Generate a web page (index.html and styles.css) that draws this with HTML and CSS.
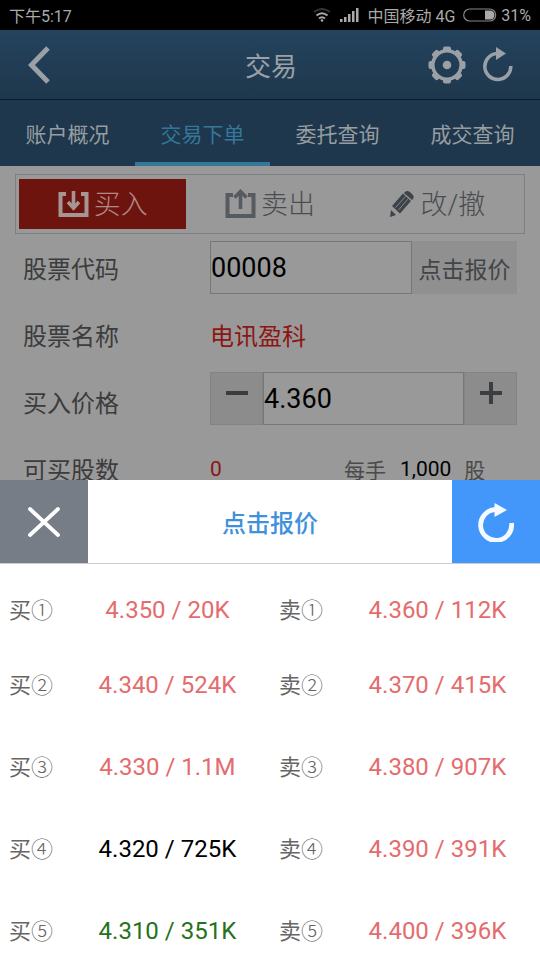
FILE: index.html
```html
<!DOCTYPE html>
<html lang="zh-CN">
<head>
<meta charset="utf-8">
<meta name="viewport" content="width=device-width, initial-scale=1">
<title>交易</title>
<link rel="stylesheet" href="styles.css">
</head>
<body>
<div class="page">
  <div class="status">
    <span class="clock">下午5:17</span>
    <svg class="wifi" width="18" height="14" viewBox="0 0 18 14" fill="none" stroke="#aaa"><path d="M1 4Q9-2 17 4" stroke="#333" stroke-width="2"/><path d="M3.500 7.500Q9 3 14.500 7.500" stroke-width="2"/><path d="M6 10.500Q9 8 12 10.500" stroke-width="2"/><circle cx="9" cy="12.500" r="1.300" fill="#aaa" stroke="none"/></svg>
    <svg class="signal" width="19" height="14" viewBox="0 0 19 14" fill="#aaa"><path d="M0 11h2.500v3H0zM4 9h2.500v5H4zM8 6h2.500v8H8zM12 3h2.500v11H12zM16 0h2.500v14H16z"/></svg>
    <span class="carrier">中国移动 4G</span>
    <svg class="battery" width="34" height="14" viewBox="0 0 34 14"><rect x=".7" y="1" width="32" height="12" rx="6" fill="none" stroke="#888" stroke-width="1.200"/><path d="M22 2.500h5a4.500 4.500 0 0 1 0 9h-5z" fill="#aaa"/></svg>
    <span>31%</span>
  </div>
  <header class="header">
    <button class="icon-button back" aria-label="返回"><svg width="22" height="38" viewBox="0 0 22 38" fill="none" stroke="#9aa0a5" stroke-width="5"><path d="M20 2L3.500 19L20 36"/></svg></button>
    <h1>交易</h1>
    <div class="actions">
      <button class="icon-button" aria-label="设置"><svg width="38" height="38" viewBox="-19 -19 38 38" fill="#9aa0a5"><circle r="14.200" fill="none" stroke="#9aa0a5" stroke-width="3.600"/><g id="teeth"><rect x="-4" y="-18.500" width="8" height="5" rx="2"/><rect x="-4" y="13.500" width="8" height="5" rx="2"/><rect x="-18.500" y="-4" width="5" height="8" rx="2"/><rect x="13.500" y="-4" width="5" height="8" rx="2"/></g><use href="#teeth" transform="rotate(45)"/><circle r="4.300"/></svg></button>
      <button class="icon-button" aria-label="刷新"><svg width="32" height="36" viewBox="0 0 32 36"><path d="M28.800 19A13 13 0 1 1 15 6.500" fill="none" stroke="#9aa0a5" stroke-width="3.500"/><path d="M14 0L24 6.500L14 13z" fill="#9aa0a5"/></svg></button>
    </div>
  </header>
  <nav class="tabs">
    <a href="#overview">账户概况</a>
    <a href="#order" class="active">交易下单</a>
    <a href="#entrust">委托查询</a>
    <a href="#deals">成交查询</a>
  </nav>
  <main>
    <div class="modes">
      <button class="mode selected"><svg width="31" height="28" viewBox="0 0 31 28" fill="none" stroke="#a59694" stroke-width="4"><path d="M8 4H2.500V25H28.500V4H23"/><path d="M15.500 1V17M10 12L15.500 18L21 12" stroke-width="3.600"/></svg><span>买入</span></button>
      <button class="mode"><svg width="31" height="30" viewBox="0 0 31 30" fill="none" stroke="#565b61" stroke-width="4"><path d="M8 6H2.500V27H28.500V6H23"/><path d="M15.500 20V3M9.500 8.500L15.500 2.500L21.500 8.500" stroke-width="3.600"/></svg><span>卖出</span></button>
      <button class="mode edit"><svg width="26" height="28" viewBox="0 0 26 28"><path d="M3 16L14 3.500L22 11L11 23.500zM16 2Q18 0 21 2L24 5Q25.500 7 24 9L23 10L15 3z" fill="#3e434a"/><path d="M6.500 17.500L16.500 6.500M9.500 20L19 9" stroke="#80858a" stroke-width="1"/><path d="M2 20L7 25L1 27z" fill="#3e434a"/></svg><span>改/撤</span></button>
    </div>
    <form class="form">
      <div class="row">
        <label for="code">股票代码</label>
        <div class="field"><input id="code" value="00008"><button type="button" class="quote">点击报价</button></div>
      </div>
      <div class="row"><span class="caption">股票名称</span><span class="name">电讯盈科</span></div>
      <div class="row">
        <label for="price">买入价格</label>
        <div class="field price">
          <button type="button" class="step" aria-label="减"><svg width="24" height="24" viewBox="0 0 24 24"><path d="M1 12H23" stroke="#3c3c3c" stroke-width="4"/></svg></button>
          <input id="price" value="4.360">
          <button type="button" class="step" aria-label="加"><svg width="24" height="24" viewBox="0 0 24 24"><path d="M1 12H23M12 1V23" stroke="#3c3e42" stroke-width="4"/></svg></button>
        </div>
      </div>
      <div class="row"><span class="caption">可买股数</span><div class="lot"><span class="zero">0</span><span>每手</span><span class="number">1,000</span><span>股</span></div></div>
    </form>
  </main>
  <section class="sheet" aria-labelledby="sheet-title">
    <div class="sheet-head">
      <button class="close" aria-label="关闭"><svg width="34" height="32" viewBox="0 0 34 32"><path d="M3 3L31 29M31 3L3 29" stroke="#fff" stroke-width="3.800" stroke-linecap="round"/></svg></button>
      <h2 id="sheet-title">点击报价</h2>
      <button class="refresh" aria-label="刷新报价"><svg width="38" height="40" viewBox="0 0 38 40"><path d="M34.500 21A15.500 15.500 0 1 1 18 7.500" fill="none" stroke="#f4faff" stroke-width="4.800"/><path d="M17.500 1L30 8L17.500 15z" fill="#f4faff"/></svg></button>
    </div>
    <table class="quotes">
      <tbody>
        <tr><th scope="row">买<span>①</span></th><td>4.350 / 20K</td><th scope="row">卖<span>①</span></th><td>4.360 / 112K</td></tr>
        <tr><th scope="row">买<span>②</span></th><td>4.340 / 524K</td><th scope="row">卖<span>②</span></th><td>4.370 / 415K</td></tr>
        <tr><th scope="row">买<span>③</span></th><td>4.330 / 1.1M</td><th scope="row">卖<span>③</span></th><td>4.380 / 907K</td></tr>
        <tr><th scope="row">买<span>④</span></th><td class="flat">4.320 / 725K</td><th scope="row">卖<span>④</span></th><td>4.390 / 391K</td></tr>
        <tr><th scope="row">买<span>⑤</span></th><td class="down">4.310 / 351K</td><th scope="row">卖<span>⑤</span></th><td>4.400 / 396K</td></tr>
      </tbody>
    </table>
  </section>
</div>
</body>
</html>
```
FILE: styles.css
```css
* { box-sizing: border-box; }
body {
  margin: 0;
  font-family: Roboto, "Noto Sans CJK SC", sans-serif;
}
button, input {
  font: inherit;
  margin: 0;
  padding: 0;
  border: 0;
  border-radius: 0;
  background: none;
  color: inherit;
}
svg { display: block; flex: none; }
.page {
  position: relative;
  height: 100vh;
  overflow: hidden;
  background: #999;
}
.status {
  display: flex;
  align-items: center;
  height: 30px;
  padding: 0 9px;
  background: #000;
  color: #aaa;
  font-size: 16px;
}
.clock { flex: 1; }
.signal { margin: 0 8px 0 9px; }
.battery { margin: 0 4px 0 8px; }
.header {
  display: grid;
  grid-template-columns: 1fr auto 1fr;
  align-items: center;
  height: 70px;
  padding: 0 26px 0 28px;
  background: linear-gradient(#24435e, #1e374c);
  border-bottom: 1px solid #0c1e2e;
  color: #9aa0a5;
}
h1 { margin: 0; font-size: 26px; font-weight: 400; }
.back { justify-self: start; }
.actions { display: flex; align-items: center; justify-content: flex-end; gap: 16px; }
.tabs {
  display: grid;
  grid-template-columns: repeat(4, 1fr);
  height: 66px;
  background: #1e374c;
}
.tabs a {
  display: flex;
  align-items: center;
  justify-content: center;
  padding-top: 3px;
  border-bottom: 4px solid transparent;
  color: #979da1;
  font-size: 21px;
  text-decoration: none;
}
.tabs .active { color: #34779a; border-color: #34779a; }
.modes {
  display: grid;
  grid-template-columns: repeat(3, 1fr);
  height: 60px;
  margin: 8px 15px 0;
  padding: 4px 3px;
  border: 1px solid #7e8184;
}
.mode {
  display: flex;
  align-items: center;
  justify-content: center;
  gap: 5px;
  color: #4a4d50;
  font-size: 27px;
  font-weight: 300;
}
.mode span { padding-bottom: 3px; }
.mode.selected { background: #6e140f; color: #b08a87; }
.form { padding: 0 23px; }
.row {
  display: grid;
  grid-template-columns: 187px minmax(0, 1fr);
  align-items: center;
  min-height: 67px;
  color: #3c3c3c;
  font-size: 24px;
}
.field {
  display: flex;
  height: 53px;
}
.field input {
  flex: 1;
  width: 0;
  min-width: 0;
  border: 1px solid #777;
  color: #000;
  font-size: 27px;
}
.quote { flex: none; width: 105px; background: #909090; color: #424548; font-size: 23px; }
.price { margin-bottom: 6px; }
.step {
  display: flex;
  flex: none;
  align-items: flex-start;
  justify-content: center;
  width: 53px;
  padding-top: 8px;
  background: #8c8c8c;
  border: 1px solid #848484;
}
.name { color: #8c1612; }
.lot { display: flex; align-items: center; font-size: 21px; color: #4a4a4a; }
.zero { flex: 0 0 134px; color: #8c1612; }
.number { margin: 0 13px 0 14px; color: #000; }
.sheet {
  position: absolute;
  top: 50%;
  left: 0;
  right: 0;
  background: #fff;
}
.sheet-head {
  display: grid;
  grid-template-columns: 88px 1fr 88px;
  height: 84px;
  border-bottom: 1px solid #ccc;
}
.sheet-head button { display: grid; place-items: center; }
.close { background: #777d86; }
.refresh { background: #4397fb; }
h2 {
  margin: 0;
  align-self: center;
  text-align: center;
  color: #4190dc;
  font-size: 24px;
  font-weight: 500;
}
.quotes { width: 100%; table-layout: fixed; border-collapse: collapse; }
.quotes tr { height: 82px; }
.quotes tr:first-child { height: 80px; }
.quotes th, .quotes td { padding: 0; }
.quotes th {
  width: 12%;
  padding: 0 0 4px 9px;
  text-align: left;
  color: #666;
  font-size: 22px;
  font-weight: 400;
}
.quotes th span { font-weight: 300; }
.quotes td {
  width: 38%;
  text-align: center;
  color: #e46c6c;
  font-size: 24px;
}
.quotes tr:first-child > * { padding-top: 12px; }
.quotes .flat { color: #000; }
.quotes .down { color: #26711c; }
```
